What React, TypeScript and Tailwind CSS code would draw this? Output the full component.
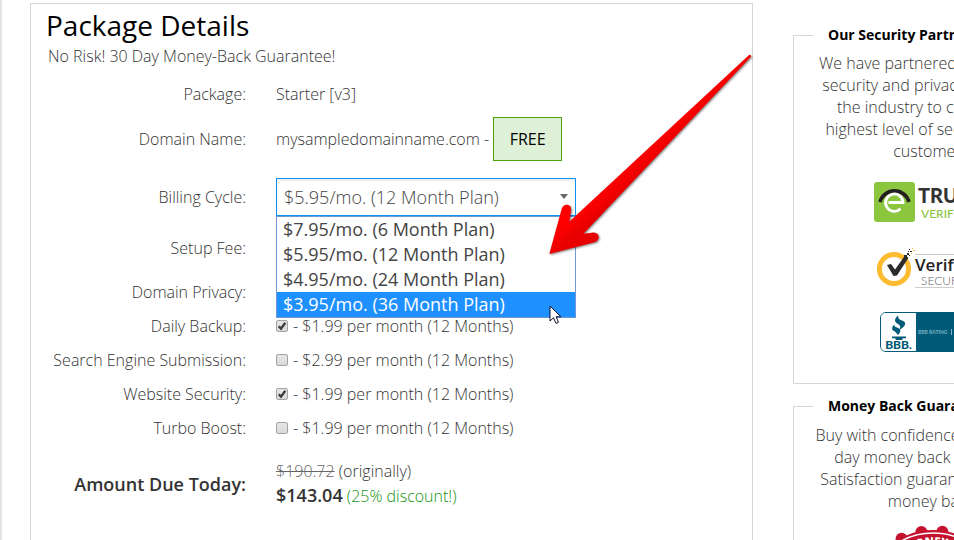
import React from "react";

const plans = [
  { id: "6", label: "$7.95/mo. (6 Month Plan)" },
  { id: "12", label: "$5.95/mo. (12 Month Plan)" },
  { id: "24", label: "$4.95/mo. (24 Month Plan)" },
  { id: "36", label: "$3.95/mo. (36 Month Plan)" },
];

const addons = [
  { id: "backup", name: "Daily Backup:", price: "$1.99", on: true },
  { id: "search", name: "Search Engine Submission:", price: "$2.99", on: false },
  { id: "security", name: "Website Security:", price: "$1.99", on: true },
  { id: "turbo", name: "Turbo Boost:", price: "$1.99", on: false },
];

const ROW = "grid grid-cols-[215px_minmax(0,1fr)] items-center gap-x-[30px]";

function AddonRow({ id, name, price, on }: (typeof addons)[number]) {
  return (
    <div className={`${ROW} h-[34px]`}>
      <label htmlFor={id} className="text-right">
        {name}
      </label>
      <div className="flex items-center gap-[5px]">
        <span className="relative block h-3 w-3">
          <input
            id={id}
            type="checkbox"
            defaultChecked={on}
            className="peer block h-3 w-3 appearance-none rounded-[2px] border border-[#a3a3a3] bg-linear-to-b from-[#e6e6e6] to-[#dadada]"
          />
          <svg
            viewBox="0 0 12 12"
            className="pointer-events-none absolute inset-0 hidden h-3 w-3 peer-checked:block"
            aria-hidden="true"
          >
            <path d="M2.7 6.2 L5 8.6 L9.3 2.8" fill="none" stroke="#3c3c3c" strokeWidth="2.3" />
          </svg>
        </span>
        <span>- {price} per month (12 Months)</span>
      </div>
    </div>
  );
}

function PointerArrow() {
  return (
    <svg
      viewBox="544 50 212 212"
      className="pointer-events-none absolute -top-32 left-[268px] h-[212px] w-[212px] drop-shadow-[1px_1px_1px_rgba(0,0,0,0.5)]"
      aria-hidden="true"
    >
      <defs>
        <linearGradient id="arrowFill" gradientUnits="userSpaceOnUse" x1="640" y1="145" x2="655" y2="161">
          <stop offset="0.3" stopColor="#ff0000" />
          <stop offset="1" stopColor="#e80000" />
        </linearGradient>
      </defs>
      <path
        d="M549.3 254 L561.8 208.5 Q563.5 204.5 567.5 204.8 Q571.8 206 571 210.5 L569.5 221.5 L748.8 55.2 Q750.8 54 751.2 56.6 L583.5 233.7 L593.5 232.4 Q598.5 232.8 598.7 237 Q598.5 241 594.5 242.2 Z"
        fill="url(#arrowFill)"
      />
    </svg>
  );
}

function MouseCursor() {
  return (
    <svg
      viewBox="0 0 13 20"
      className="pointer-events-none absolute left-[273px] top-[127px] h-5 w-[13px]"
      aria-hidden="true"
    >
      <path
        d="M1 1 V16 L4.5 12.8 L7 18.4 L9.5 17.3 L7.1 11.8 H12 Z"
        fill="#fff"
        stroke="#10102a"
        strokeWidth="1"
      />
    </svg>
  );
}

function PackageDetails() {
  return (
    <main className="min-w-[723px] flex-1 border border-[#d6d6d6] text-base leading-6 font-light">
      <h1 className="ml-[15px] mt-[3px] text-[28px] leading-9 font-normal text-black">Package Details</h1>
      <p className="ml-[17px] mt-px">No Risk! 30 Day Money-Back Guarantee!</p>

      <form className="mt-[9px]">
        <div className={`${ROW} h-[34px]`}>
          <span className="text-right">Package:</span>
          <span>Starter [v3]</span>
        </div>
        <div className={`${ROW} h-14`}>
          <span className="text-right">Domain Name:</span>
          <div className="flex items-center gap-1">
            <span>mysampledomainname.com -</span>
            <strong className="flex h-11 w-[69px] items-center justify-center border border-[#4ea30c] bg-[#dff0d8] font-medium text-black">
              FREE
            </strong>
          </div>
        </div>
        <div className={`${ROW} h-[60px]`}>
          <label htmlFor="cycle" className="text-right">
            Billing Cycle:
          </label>
          <div className="relative z-10 w-[300px]">
            <select
              id="cycle"
              defaultValue="12"
              className="block h-[38px] w-full appearance-none border border-[#0d92f4] bg-white px-[7px] text-lg leading-6 font-light text-[#444] shadow-[inset_0_2px_2px_rgba(0,0,0,0.07)]"
            >
              {plans.map((p) => (
                <option key={p.id} value={p.id}>
                  {p.label}
                </option>
              ))}
            </select>
            <span className="pointer-events-none absolute right-2 top-4 border-x-4 border-t-5 border-x-transparent border-t-[#666]" />
            <ul
              role="listbox"
              aria-label="Billing Cycle"
              className="absolute inset-x-0 top-[38px] border border-[#7098d6] bg-white text-lg leading-[25px] font-normal text-[#444]"
            >
              {plans.map((p) => (
                <li
                  key={p.id}
                  role="option"
                  aria-selected={p.id === "36"}
                  className="px-[6px] aria-selected:bg-[#1e90ff] aria-selected:text-white"
                >
                  {p.label}
                </li>
              ))}
            </ul>
            <PointerArrow />
            <MouseCursor />
          </div>
        </div>
        <div className={`${ROW} mt-1 h-[34px]`}>
          <span className="text-right">Setup Fee:</span>
        </div>
        <div className={`${ROW} mt-[10px] h-[34px]`}>
          <span className="text-right">Domain Privacy:</span>
        </div>
        {addons.map((a) => (
          <AddonRow key={a.id} {...a} />
        ))}
        <div className={`${ROW} mt-[14px] pb-20`}>
          <span className="text-right text-lg leading-6 font-semibold">Amount Due Today:</span>
          <div>
            <div>
              <s className="text-[#666]">$190.72</s> (originally)
            </div>
            <div>
              <strong className="text-lg leading-6 font-semibold">$143.04</strong>{" "}
              <span className="text-[#149414]">(25% discount!)</span>
            </div>
          </div>
        </div>
      </form>
    </main>
  );
}

function TrusteBadge() {
  return (
    <div className="flex h-10 items-center gap-[3px]">
      <svg viewBox="0 0 41 40" className="h-10 w-[41px]" aria-hidden="true">
        <rect width="41" height="40" rx="3" fill="#8cc63f" />
        <path d="M6 20 A15 15 0 0 1 35 20" fill="none" stroke="#231f20" strokeWidth="3.6" />
        <path
          d="M14.5 20.5 H29 A8.7 8.7 0 1 0 26.5 26.8"
          fill="none"
          stroke="#fff"
          strokeWidth="2.8"
        />
      </svg>
      <div className="font-[Lato,'Liberation_Sans',sans-serif]">
        <div className="text-xl leading-6 font-black text-[#333]">TRUSTe</div>
        <div className="pl-[3px] text-xs leading-[14px] font-medium text-[#8cc63f]">VERIFIED</div>
      </div>
    </div>
  );
}

function NortonBadge() {
  return (
    <div className="flex h-10 items-center">
      <svg viewBox="0 0 38 40" className="h-10 w-[38px]" aria-hidden="true">
        <circle cx="17" cy="22" r="14.6" fill="#fff" stroke="#fdbb30" strokeWidth="5" />
        <path d="M10 18 L14 17 L18 22.5 L27 10 L31 11.5 L20 28.5 L16.5 29 Z" fill="#2d2a2b" />
        <path
          d="M27 8h3v3h-3z M30 6h2v2h-2z M29 10h2v2h-2z M32 8h1v1h-1z M31 4h1v1h-1z M33 4h2v1h-2z M32 2h1v1h-1z"
          fill="#2d2a2b"
        />
        <path d="M35 1h1v1h-1z M36 3h2v1h-2z M34 6h1v1h-1z" fill="#fdbb30" />
      </svg>
      <div className="mt-2 border-y border-[#ccc] font-['Open_Sans','Noto_Sans',sans-serif]">
        <div className="text-[17px] leading-5 font-semibold text-[#222]">Verified</div>
        <div className="pl-[6px] font-[Lato,'Liberation_Sans',sans-serif] text-xs leading-3 text-[#666]">SECURED</div>
      </div>
    </div>
  );
}

function BbbBadge() {
  return (
    <div className="flex h-10 overflow-hidden rounded-md border border-[#005a78]">
      <div className="flex w-[35px] flex-col items-center bg-white pt-[2px]">
        <svg viewBox="0 0 18 25" className="h-[25px] w-[18px]" aria-hidden="true">
          <path
            d="M8 0.5 C4 4 4 7 8 9 C10 10 11 12 9.500 15 C16 11 17 7 12 5.500 C9 4.500 8 3.500 8 0.5Z M4.500 9.500 C1 12.500 1.500 15 5 16.500 L8 20 C12 16 10.500 13.500 7 12.500 C5 12 4 11 4.500 9.500Z M2 21.500 H16 V23.200 H13 L12 25 H6 L5 23.200 H2Z"
            fill="#005a78"
          />
        </svg>
        <span className="font-[Lato,'Liberation_Sans',sans-serif] text-xs leading-[10px] font-black text-[#005a78]">
          BBB.
        </span>
      </div>
      <div className="flex w-[76px] items-center gap-1 bg-[#005a78] pl-[2px] font-[Lato,'Liberation_Sans',sans-serif] text-[5px] font-bold text-[#7fb4c6]">
        <span>BBB RATING</span>
        <span className="h-[6px] w-px bg-[#7fb4c6]" />
      </div>
    </div>
  );
}

function GuaranteeSeal() {
  const scallops = Array.from({ length: 20 }, (_, i) => (i * Math.PI) / 10 + 0.14);
  return (
    <svg viewBox="0 0 148 148" className="h-[148px] w-[148px]" role="img" aria-label="Money back guarantee">
      <circle cx="74" cy="74" r="68" fill="#c41230" />
      {scallops.map((a) => (
        <circle key={a} cx={74 + 67 * Math.cos(a)} cy={74 + 67 * Math.sin(a)} r="6" fill="#c41230" />
      ))}
      <circle cx="74" cy="74" r="65" fill="none" stroke="#fff" strokeWidth="1.5" />
      <path id="sealArc" d="M21 74 A53 53 0 0 1 127 74" fill="none" />
      <text fill="#fff" fontSize="11" fontWeight="800" fontFamily="Open Sans, sans-serif">
        <textPath href="#sealArc" startOffset="56%" textAnchor="middle">
          MONEY BACK
        </textPath>
      </text>
    </svg>
  );
}

function SidePanel({ title, children }: { title: string; children: React.ReactNode }) {
  return (
    <fieldset className="border border-[#d6d6d6] text-base leading-[22px] font-light">
      <legend className="ml-[19px] px-[15px] text-sm leading-5 font-bold text-black">{title}</legend>
      {children}
    </fieldset>
  );
}

export default function App() {
  return (
    <div className="h-screen overflow-hidden bg-white font-['Open_Sans','Noto_Sans',sans-serif] text-[#333]">
      <div className="flex min-w-[1073px] items-start border-l-2 border-[#e4e4e4] pl-7 pt-[3px]">
        <PackageDetails />
        <aside className="ml-10 mt-[22px] w-[280px] shrink-0">
          <SidePanel title="Our Security Partners">
            <p className="mt-[7px] whitespace-nowrap text-center">
              We have partnered with leading
              <br />
              security and privacy vendors in
              <br />
              the industry to confirm the
              <br />
              highest level of security to our
              <br />
              customers.
            </p>
            <div className="flex flex-col gap-[25px] pt-5 pb-[31px] pl-20">
              <TrusteBadge />
              <div className="pl-[3px]">
                <NortonBadge />
              </div>
              <div className="flex pl-[6px]">
                <BbbBadge />
              </div>
            </div>
          </SidePanel>
          <div className="mt-3">
            <SidePanel title="Money Back Guarantee">
              <p className="mt-2 whitespace-nowrap text-center">
                Buy with confidence with our 30-
                <br />
                day money back guarantee.
                <br />
                Satisfaction guaranteed or your
                <br />
                money back!
              </p>
              <div className="flex justify-center pt-3">
                <GuaranteeSeal />
              </div>
            </SidePanel>
          </div>
        </aside>
      </div>
    </div>
  );
}
